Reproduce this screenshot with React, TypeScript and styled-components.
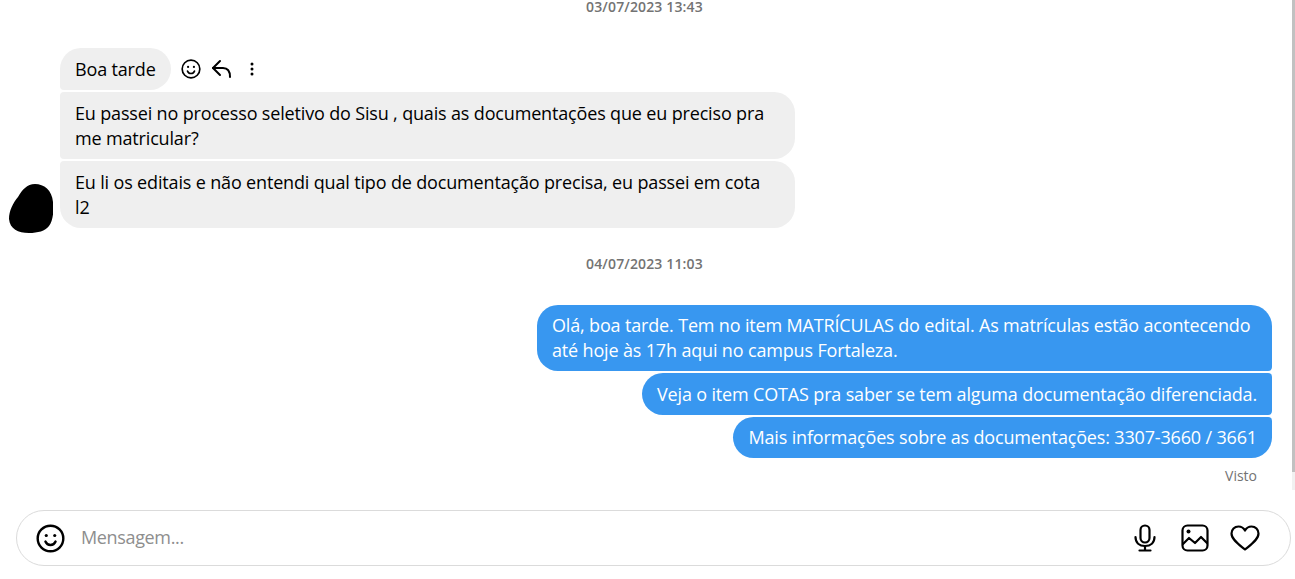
import React from "react";
import styled, { createGlobalStyle } from "styled-components";

const Global = createGlobalStyle`
  html, body { margin: 0; padding: 0; background: #fff; height: 100%; overflow: hidden; }
  #root { height: 100%; }
  * { box-sizing: border-box; }
`;

const Page = styled.div`
  width: 1295px;
  height: 579px;
  display: flex;
  flex-direction: column;
  overflow: hidden;
  font-family: "Open Sans", "Noto Sans", sans-serif;
  color: #000;
`;

const Upper = styled.div`
  height: 490px;
  display: flex;
`;

const Thread = styled.main`
  flex: 1;
  min-width: 0;
  padding: 0 20px 0 9px;
  display: flex;
  flex-direction: column;
`;

const ScrollTrack = styled.div`
  width: 3px;
  flex: none;
  background: #f1f1f1;
`;

const ScrollThumb = styled.div`
  height: 472px;
  background: #c1c1c1;
`;

const Stamp = styled.div<{ $top: number }>`
  font-size: 14px;
  line-height: 14px;
  font-weight: 600;
  letter-spacing: 0.15px;
  color: #737373;
  text-align: center;
  padding-left: 8px;
  margin-top: ${(p) => p.$top}px;
  margin-bottom: 34px;
`;

const Group = styled.div`
  display: flex;
  align-items: flex-end;
  gap: 7px;
`;

const Avatar = styled.svg`
  width: 44px;
  height: 52px;
  flex: none;
  margin-bottom: -6px;
`;

const Stack = styled.div`
  display: flex;
  flex-direction: column;
  gap: 2.5px;
  flex: 1;
  align-items: flex-start;
`;

const OwnStack = styled.div`
  display: flex;
  flex-direction: column;
  gap: 2px;
  align-items: flex-end;
`;

const Row = styled.div`
  display: flex;
  align-items: center;
  gap: 10px;
`;

const Bubble = styled.div<{ $mine?: boolean; $radius: string; $wide?: boolean }>`
  font-size: 18px;
  line-height: 25px;
  letter-spacing: -0.16px;
  padding: 8.5px 15px 8px;
  border-radius: ${(p) => p.$radius};
  background: ${(p) => (p.$mine ? "#3897f0" : "#efefef")};
  color: ${(p) => (p.$mine ? "#fff" : "#000")};
  width: ${(p) => (p.$wide ? "735px" : "auto")};
`;

const Actions = styled.div`
  display: flex;
  align-items: center;
`;

const ActionIcon = styled.svg<{ $gap?: number }>`
  display: block;
  flex: none;
  margin-right: ${(p) => p.$gap ?? 0}px;
`;

const Seen = styled.div`
  font-size: 14px;
  line-height: 18px;
  color: #737373;
  text-align: right;
  margin-top: 9px;
  padding-right: 15px;
`;

const Composer = styled.footer`
  flex: 1;
  padding: 20px 4px 13px 16px;
`;

const Field = styled.div`
  height: 56px;
  border: 1px solid #dbdbdb;
  border-radius: 28px;
  display: flex;
  align-items: center;
  padding: 0 30px 0 19px;
`;

const Placeholder = styled.div`
  flex: 1;
  font-size: 18px;
  line-height: 24px;
  letter-spacing: -0.35px;
  color: #8e8e8e;
  margin-left: 16px;
  margin-top: -3px;
`;

const ToolIcon = styled.svg<{ $gap: number }>`
  display: block;
  flex: none;
  margin-left: ${(p) => p.$gap}px;
`;

const Smile = ({ size, gap }: { size: number; gap?: number }) => (
  <ActionIcon $gap={gap} width={size} height={size} viewBox="0 0 24 24" fill="none" stroke="#000" strokeWidth="2">
    <circle cx="12" cy="12" r="10.6" />
    <path d="M7.800 14.500c.8 1.900 2.300 2.900 4.200 2.900s3.400-1 4.200-2.900" strokeLinecap="round" />
    <circle cx="8.500" cy="9.500" r="1.300" fill="#000" stroke="none" />
    <circle cx="15.500" cy="9.500" r="1.300" fill="#000" stroke="none" />
  </ActionIcon>
);

export default function App() {
  return (
    <Page>
      <Global />
      <Upper>
        <Thread>
          <Stamp $top={0}>03/07/2023 13:43</Stamp>
          <Group>
            <Avatar viewBox="0 0 44 52">
              <path d="M26 2c9 0 17 6 18 18c1 9 0 19-4 24c-4 5-11 7-20 7C9 51 1 47 0 37C0 29 4 21 9 15C13 8 18 2 26 2Z" fill="#000" />
            </Avatar>
            <Stack>
              <Row>
                <Bubble $radius="21px 21px 21px 4px">Boa tarde</Bubble>
                <Actions>
                  <Smile size={20} gap={10} />
                  <ActionIcon $gap={17} width={22} height={20} viewBox="0 0 22 20" fill="none" stroke="#000" strokeWidth="2" strokeLinecap="round" strokeLinejoin="round">
                    <path d="M9 2L2 9l7 7" />
                    <path d="M2 9h10c4.500 0 7 3 7 9" />
                  </ActionIcon>
                  <ActionIcon width={4} height={14} viewBox="0 0 4 14" fill="#000">
                    <circle cx="2" cy="2" r="1.500" />
                    <circle cx="2" cy="7" r="1.500" />
                    <circle cx="2" cy="12" r="1.500" />
                  </ActionIcon>
                </Actions>
              </Row>
              <Bubble $wide $radius="4px 21px 21px 4px">
                Eu passei no processo seletivo do Sisu , quais as documentações que eu preciso pra me matricular?
              </Bubble>
              <Bubble $wide $radius="4px 21px 21px 21px">
                Eu li os editais e não entendi qual tipo de documentação precisa, eu passei em cota<br />l2
              </Bubble>
            </Stack>
          </Group>
          <Stamp $top={29}>04/07/2023 11:03</Stamp>
          <OwnStack>
            <Bubble $mine $wide $radius="21px 21px 4px 21px">
              Olá, boa tarde. Tem no item MATRÍCULAS do edital. As matrículas estão acontecendo até hoje às 17h aqui no campus Fortaleza.
            </Bubble>
            <Bubble $mine $radius="21px 4px 4px 21px">
              Veja o item COTAS pra saber se tem alguma documentação diferenciada.
            </Bubble>
            <Bubble $mine $radius="21px 4px 21px 21px">
              Mais informações sobre as documentações: 3307-3660 / 3661
            </Bubble>
          </OwnStack>
          <Seen>Visto</Seen>
        </Thread>
        <ScrollTrack>
          <ScrollThumb />
        </ScrollTrack>
      </Upper>
      <Composer>
        <Field>
          <Smile size={29} />
          <Placeholder>Mensagem...</Placeholder>
          <ToolIcon $gap={0} width={24} height={28} viewBox="0 0 24 28" fill="none" stroke="#000" strokeWidth="2.200" strokeLinecap="round">
            <rect x="7.500" y="1.500" width="9" height="17" rx="4.500" />
            <path d="M2.500 13c0 6 4 9 9.500 9s9.500-3 9.500-9" />
            <path d="M12 22v4M6.500 26.500h11" />
          </ToolIcon>
          <ToolIcon $gap={24} width={28} height={28} viewBox="0 0 28 28" fill="none" stroke="#000" strokeWidth="2.200" strokeLinejoin="round" strokeLinecap="round">
            <rect x="1.500" y="1.500" width="25" height="25" rx="5" />
            <circle cx="7.500" cy="7.500" r="2" fill="#000" stroke="none" />
            <path d="M2 20l6-6 6 5 6-6 6 6" />
          </ToolIcon>
          <ToolIcon $gap={21} width={30} height={26} viewBox="0 0 30 26" fill="none" stroke="#000" strokeWidth="2.200" strokeLinejoin="round">
            <path d="M15 24.500C9 19.500 1.500 14.500 1.500 8.500C1.500 4.500 4.500 1.500 8.500 1.500C11 1.500 13.500 2.800 15 5.500C16.500 2.800 19 1.500 21.500 1.500C25.500 1.500 28.500 4.500 28.500 8.500C28.500 14.500 21 19.500 15 24.500Z" />
          </ToolIcon>
        </Field>
      </Composer>
    </Page>
  );
}
